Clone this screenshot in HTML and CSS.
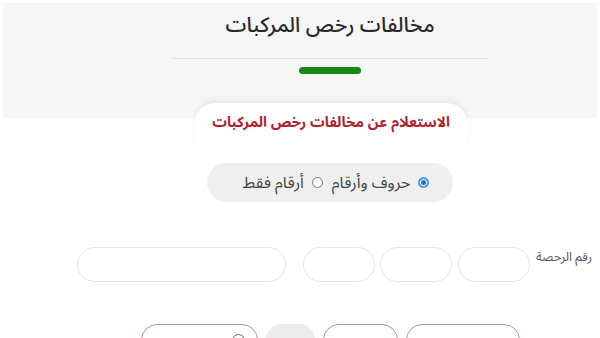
FILE: index.html
```html
<!DOCTYPE html>
<html lang="ar" dir="rtl">
<head>
<meta charset="utf-8">
<link rel="stylesheet" href="styles.css">
</head>
<body>
<header class="hero">
  <h1 class="hero-title">مخالفات رخص المركبات</h1>
  <div class="hero-line"></div>
  <div class="hero-bar"></div>
</header>
<main class="main">
  <div class="tab">الاستعلام عن مخالفات رخص المركبات</div>
  <div class="choice">
    <label class="opt"><span class="radio radio-on"></span>حروف وأرقام</label>
    <label class="opt"><span class="radio"></span>أرقام فقط</label>
  </div>
  <div class="plate-row">
    <span class="plate-label">رقم الرحصة</span>
    <span class="box box-sm"></span>
    <span class="box box-sm"></span>
    <span class="box box-sm"></span>
    <span class="box box-lg"></span>
  </div>
  <div class="actions">
    <span class="btn btn-wide">استعلام المخالفات</span>
    <span class="btn btn-mid">مسح</span>
    <span class="btn btn-gray"></span>
    <span class="btn btn-left"><span class="btn-ico"></span>طباعة</span>
  </div>
</main>
</body>
</html>
```

FILE: styles.css
```css
* { box-sizing: border-box; }
html, body { margin: 0; padding: 0; background: #fff; }
body {
  width: 600px;
  height: 338px;
  overflow: hidden;
  font-family: "Noto Sans Arabic", "DejaVu Sans", sans-serif;
  color: #333;
}
.hero {
  margin: 3px 3px 0;
  height: 115px;
  background: #f6f6f6;
  display: flex;
  flex-direction: column;
  align-items: center;
  padding-left: 60px;
}
.hero-title {
  margin: 8px 0 0;
  font-size: 21px;
  line-height: 28px;
  font-weight: 500;
  color: #2a2a2a;
}
.hero-line {
  margin-top: 19px;
  width: 316px;
  height: 1px;
  background: #e2e2e2;
}
.hero-bar {
  margin-top: 8px;
  width: 62px;
  height: 7px;
  border-radius: 4px;
  background: #178a17;
}
.main {
  display: flex;
  flex-direction: column;
  align-items: center;
}
.tab {
  margin-top: -15px;
  margin-left: 62px;
  width: 272px;
  height: 42px;
  border-radius: 20px 20px 0 0;
  background: #fff;
  box-shadow: 0 -3px 6px rgba(0,0,0,0.06);
  display: flex;
  align-items: center;
  justify-content: center;
  padding-bottom: 4px;
  font-size: 14.5px;
  font-weight: bold;
  color: #b3202e;
}
.choice {
  margin-top: 18px;
  margin-left: 60px;
  width: 246px;
  height: 39px;
  border-radius: 20px;
  background: #efefef;
  display: flex;
  align-items: center;
  justify-content: center;
  gap: 9px;
  padding-left: 12px;
  font-size: 16px;
  color: #444;
}
.opt { display: flex; align-items: center; gap: 8px; }
.radio {
  width: 11px;
  height: 11px;
  border-radius: 50%;
  border: 1px solid #777;
  background: #fff;
}
.radio-on {
  border: 2px solid #5b9be0;
  background: #1f6fd0;
  box-shadow: inset 0 0 0 1px #fff;
}
.plate-row {
  align-self: stretch;
  margin-top: 45px;
  padding-right: 8px;
  display: flex;
  align-items: flex-start;
}
.plate-label {
  margin-top: 1px;
  margin-left: 7px;
  width: 55px;
  font-size: 12.5px;
  line-height: 18px;
  color: #555;
  white-space: nowrap;
}
.box {
  height: 35px;
  border: 1px solid #e6e6e6;
  border-radius: 18px;
  background: #fff;
}
.box-sm { width: 72px; margin-left: 6px; }
.box-sm:nth-of-type(3) { margin-left: 5px; }
.box-sm:nth-of-type(4) { margin-left: 17px; }
.box-lg { width: 209px; }
.actions {
  margin-top: 42px;
  margin-left: 60px;
  display: flex;
  gap: 8px;
}
.btn {
  height: 32px;
  border: 1.5px solid #c08e8e;
  border-radius: 16px;
  display: flex;
  justify-content: center;
  padding-top: 8px;
  font-size: 12px;
  color: #555;
  white-space: nowrap;
}
.btn-wide { width: 114px; }
.btn-mid { width: 75px; }
.btn-gray { width: 49px; border: none; background: #ececec; }
.btn-left { width: 117px; gap: 6px; justify-content: flex-start; padding-right: 12px; }
.btn-ico {
  width: 13px;
  height: 13px;
  border: 1.5px solid #666;
  border-radius: 50%;
  margin-top: 1px;
}
```
